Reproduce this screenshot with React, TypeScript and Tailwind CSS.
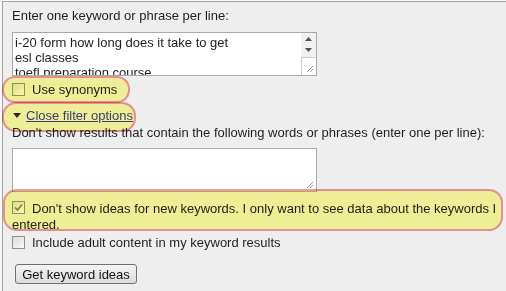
import React from "react";

function Checkbox({ checked = false, className = "" }: { checked?: boolean; className?: string }) {
  return (
    <span className={"inline-flex w-[13px] h-[13px] shrink-0 border border-[#8f8f8f] bg-gradient-to-br from-[#dcdcdc] to-[#fafafa] items-center justify-center " + className}>
      {checked && (
        <svg width="9" height="9" viewBox="0 0 9 9">
          <path d="M1 4.5 L3.5 7 L8 1.5" fill="none" stroke="#7a7a7a" strokeWidth="1.6" />
        </svg>
      )}
    </span>
  );
}

function Grip() {
  return (
    <svg width="8" height="8" viewBox="0 0 8 8" className="absolute right-[2px] bottom-[2px]">
      <path d="M7 1 L1 7 M7 4 L4 7" stroke="#9a9a9a" strokeWidth="1" />
    </svg>
  );
}

export default function App() {
  return (
    <div className="relative w-[506px] h-[291px] overflow-hidden bg-[#f7f7f7] font-['Liberation_Sans',Arial,sans-serif] text-[13px] leading-[15px] text-[#1e1e1e]">
      <div className="ml-[2px] mt-[1px] h-full border-t border-l border-[#a3a3a3] bg-[#eeeeee] pl-[9px] pt-[6px] flex flex-col">
        <div className="h-[15px]">Enter one keyword or phrase per line:</div>

        <div className="mt-[9px] w-[305px] h-[44px] border border-[#a9a9a9] bg-white flex overflow-hidden">
          <div className="flex-1 pl-[2px] pt-[2px] leading-[15px] overflow-hidden">
            <div>i-20 form how long does it take to get</div>
            <div>esl classes</div>
            <div>toefl preparation course</div>
          </div>
          <div className="w-[15px] flex flex-col bg-[#f1f1f1]">
            <div className="h-[24px] flex flex-col items-center justify-start pt-[4px] gap-[7px]">
              <svg width="7" height="4" viewBox="0 0 7 4"><path d="M0 4 L3.5 0 L7 4 Z" fill="#505050" /></svg>
              <svg width="7" height="4" viewBox="0 0 7 4"><path d="M0 0 L3.5 4 L7 0 Z" fill="#505050" /></svg>
            </div>
            <div className="relative flex-1 border-t border-l border-[#cfcfcf] bg-white">
              <Grip />
            </div>
          </div>
        </div>

        <div className="mt-[6px] h-[15px] flex items-center gap-[7px]">
          <Checkbox />
          <span>Use synonyms</span>
        </div>

        <div className="mt-[11px] h-[15px] flex items-center gap-[5px] ml-[1px]">
          <span className="w-0 h-0 border-l-[4px] border-r-[4px] border-t-[5px] border-l-transparent border-r-transparent border-t-[#2a2a2a]" />
          <span className="text-[#3c3cb4] underline">Close filter options</span>
        </div>

        <div className="mt-[2px] h-[15px] whitespace-nowrap">
          Don't show results that contain the following words or phrases (enter one per line):
        </div>

        <div className="relative mt-[8px] w-[305px] h-[44px] border border-[#a9a9a9] bg-white">
          <Grip />
        </div>

        <div className="mt-[9px] w-[488px]">
          <Checkbox checked className="align-[-2px] relative -top-[3px]" />
          <span className="ml-[7px]">Don't show ideas for new keywords. I only want to see data about the keywords I entered.</span>
        </div>

        <div className="mt-[3px] h-[15px] flex items-center gap-[7px]">
          <Checkbox />
          <span>Include adult content in my keyword results</span>
        </div>

        <div className="mt-[14px] ml-[3px]">
          <button className="h-[20px] w-[122px] rounded-[3px] border border-[#707070] bg-gradient-to-b from-[#f4f4f4] to-[#dcdcdc] text-[13px] leading-[15px] text-[#111] font-['Liberation_Sans',Arial,sans-serif]">
            Get keyword ideas
          </button>
        </div>
      </div>

      {/* annotation highlights */}
      <div className="absolute left-[2px] top-[76px] w-[128px] h-[27px] rounded-[13px] border-2 border-[#f59a9a] bg-[#ffffa2] mix-blend-multiply pointer-events-none" />
      <div className="absolute left-[2px] top-[102px] w-[134px] h-[30px] rounded-[14px] border-2 border-[#f59a9a] bg-[#ffffa2] mix-blend-multiply pointer-events-none" />
      <div className="absolute left-[3px] top-[189px] w-[500px] h-[42px] rounded-[14px] border-2 border-[#f59a9a] bg-[#ffffa2] mix-blend-multiply pointer-events-none" />
    </div>
  );
}
